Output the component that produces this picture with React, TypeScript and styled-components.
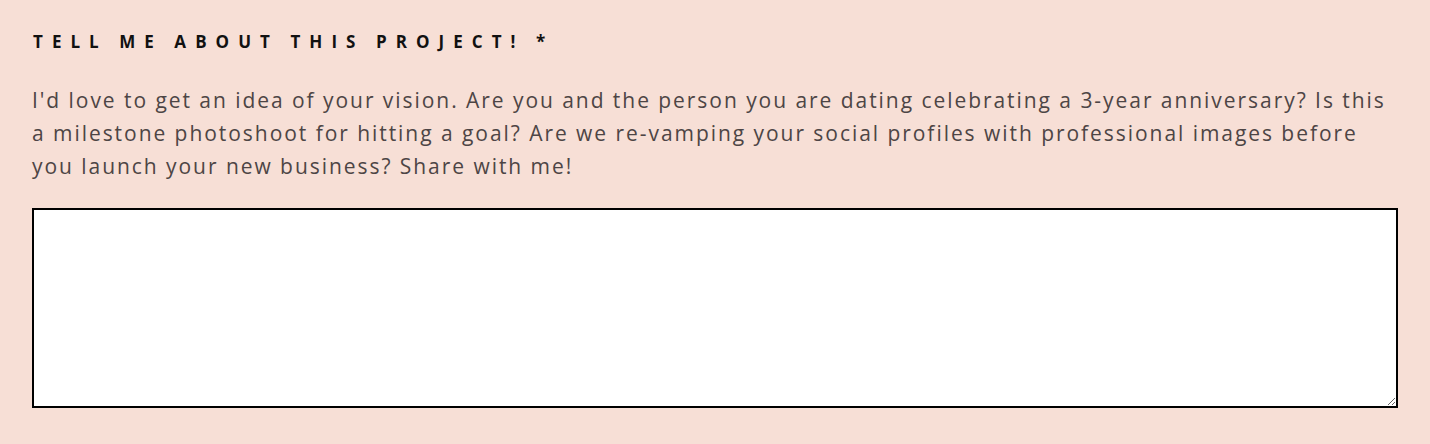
import React from "react";
import styled, { createGlobalStyle } from "styled-components";

const Global = createGlobalStyle`
  html, body { margin: 0; padding: 0; background: #f7dfd6; }
  body { font-family: "Open Sans", "Lato", sans-serif; }
`;

const Page = styled.div`
  min-height: 444px;
  box-sizing: border-box;
  padding: 30px 32px 0 32px;
  background: #f7dfd6;
`;

const Label = styled.label`
  display: block;
  font-family: "Open Sans", sans-serif;
  font-weight: 700;
  font-size: 17px;
  line-height: 24px;
  letter-spacing: 9.05px;
  word-spacing: -2px;
  color: #111;
  text-transform: uppercase;
  margin: 0 0 30px 1px;
`;

const Help = styled.p`
  margin: 0 0 25px 0;
  font-family: "Open Sans", sans-serif;
  font-size: 21px;
  line-height: 33px;
  letter-spacing: 1.95px;
  color: #4d4545;
  max-width: 1366px;
`;

const Area = styled.textarea`
  display: block;
  box-sizing: border-box;
  width: 1366px;
  height: 200px;
  border: 2px solid #000;
  background: #fff;
  margin: 0;
  padding: 8px;
  font-family: "Open Sans", sans-serif;
  font-size: 18px;
  outline: none;
`;

export default function App() {
  return (
    <Page>
      <Global />
      <Label htmlFor="project">Tell me about this project! *</Label>
      <Help>
        I'd love to get an idea of your vision. Are you and the person you are dating celebrating a
        3-year anniversary? Is this a milestone photoshoot for hitting a goal? Are we re-vamping your
        social profiles with professional images before you launch your new business? Share with me!
      </Help>
      <Area id="project" />
    </Page>
  );
}
